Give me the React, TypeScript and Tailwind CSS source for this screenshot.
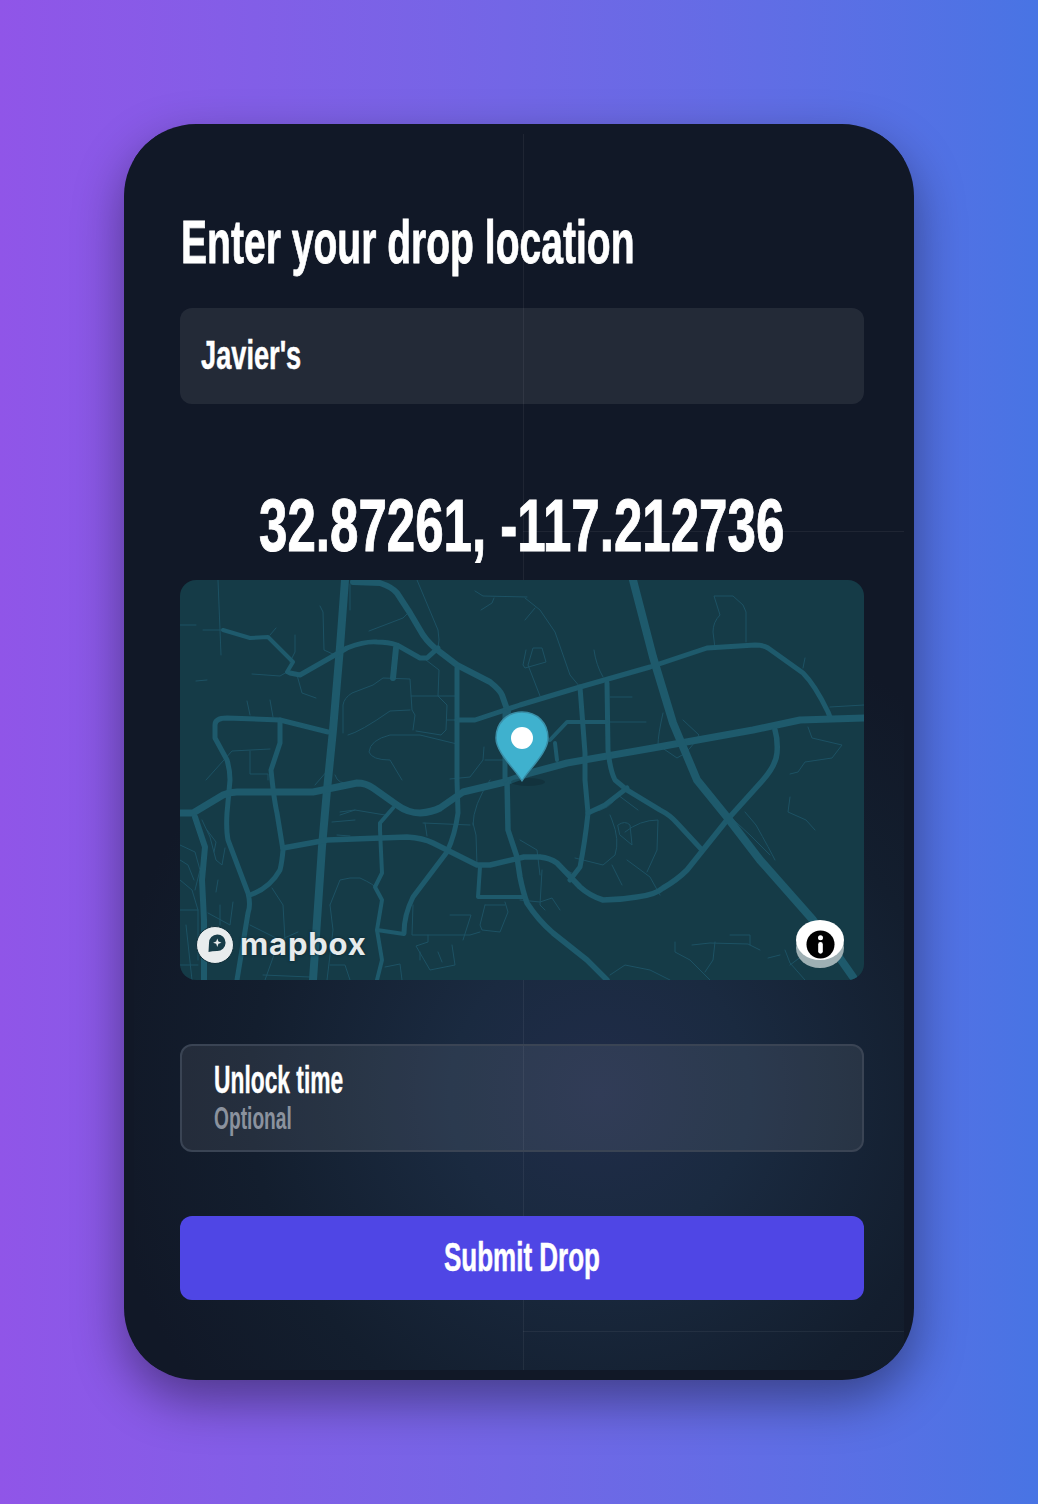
import React from 'react';

// major roads, in map coordinates (684x400)
const majorRoads: [string, number][] = [
  ['M165 0 L160 67 L153 150 L147 210 L142 267 L133 400', 8],
  ['M173 2 L200 3 Q212 7 217 13 L230 33 L243 55 Q250 65 260 72 L277 85 L310 102 Q320 110 322 115 L328 132', 6],
  ['M110 93 L120 95 L155 75 L167 68 Q185 61 197 62 Q208 62 217 65 L240 78 L247 78 L258 68', 5],
  ['M43 50 L70 58 L88 57 L113 82 L107 92 L110 93', 4],
  ['M216 68 L213 98', 6],
  ['M277 88 L277 200 L278 233 Q275 255 267 272 L233 317 Q224 335 224 353', 5],
  ['M277 140 L295 140 L340 125 L400 107 L470 87 L527 68 L575 65 Q583 65 588 68 L623 93 Q635 105 648 132 L650 137', 5],
  ['M148 152 L100 140 L47 138 Q35 138 35 145 L35 158 L47 180 Q50 190 50 200 L47 233 Q46 250 48 260 L68 313 Q71 325 68 333 L57 400', 5],
  ['M100 140 L100 163 L91 190 Q94 220 97 233 L103 270 Q102 282 100 290 Q90 308 70 315', 5],
  ['M0 233 L13 233 L43 215 Q50 212 57 212 L133 212 L177 203 Q186 203 193 208 L217 225 Q228 233 240 233 Q252 232 260 228 L283 212 L325 202 L350 193 L387 183 L473 168 L573 150 L620 140 L684 138', 7],
  ['M15 237 L25 267 L22 300 L24 340 L24 400', 6],
  ['M103 268 L147 260 L227 257 Q243 258 253 263 L277 275 L297 285 L310 285 L344 277 L360 277 Q370 278 377 283 L400 307 Q410 316 423 320 Q440 320 457 317 Q475 315 483 308 Q497 300 507 290 L547 240 L583 200 Q596 185 597 173 Q598 160 595 150', 5.5],
  ['M327 200 L328 250 L337 277 L340 297 Q343 312 347 323 Q358 340 373 353 L407 380 L427 400', 5.5],
  ['M213 228 L200 243 L200 250 L202 293 L195 307 L202 320 L197 350 L202 380 L197 400', 4],
  ['M197 350 L224 354', 4],
  ['M300 287 L298 317 L344 317', 4],
  ['M453 0 L473 77 L493 143 L517 200 L547 237 L580 280 L633 340 L673 397', 8],
  ['M400 107 L405 173 L405 200 L408 233 Q405 262 400 287 L390 300', 5],
  ['M427 103 L428 170 Q430 190 435 200 L447 210 L480 230 Q490 235 497 243 L522 270', 5],
  ['M408 233 L425 225 L447 208', 5],
  ['M370 160 L387 142 L427 142', 4],
  ['M375 163 L377 180', 4],
  ['M325 132 L325 200', 5],
];

// thin local streets
const minorRoads: string[] = [
  'M38 0 L41 75', 'M0 45 L16 45', 'M23 50 L43 50', 'M90 55 L96 48', 'M115 55 L115 72 L110 82',
  'M140 26 L143 32 L144 70 L155 75', 'M72 94 L100 96 L107 92', 'M117 95 L122 113 L136 118',
  'M16 101 L27 100', 'M67 121 L70 135', 'M90 120 L93 137',
  'M170 4 L170 30', 'M189 51 L223 38 L228 33', 'M237 0 L258 50 L259 60 L258 68',
  'M295 11 L303 16 L347 17', 'M314 18 L312 23 L301 30',
  'M163 153 L163 125 Q164 118 172 113 L193 105 L203 98 L230 99 L232 130 L235 135 L233 150',
  'M231 116 L277 116', 'M246 80 L259 90 L258 116 L267 125 L266 150 L261 155 L236 151',
  'M277 140 L267 140', 'M168 155 Q180 152 210 131 L230 130',
  'M277 164 L240 155 L210 155 Q190 160 189 172 Q192 180 210 180 L222 200',
  'M304 167 L303 180 L290 197 L270 199', 'M305 180 L325 180',
  'M26 200 L52 171 L90 169', 'M70 171 L70 194 L88 194 L88 200',
  'M148 190 L135 205', 'M155 195 Q158 205 170 203',
  'M345 18 L360 30 L375 52 L390 95 L400 107', 'M345 40 L355 28',
  'M346 70 L343 85 L345 88 L366 82 L362 68 L353 68 L348 85 L360 116',
  'M414 70 Q416 85 423 97', 'M430 117 L452 117', 'M430 142 L466 142',
  'M535 68 L533 52 Q533 42 540 35 L534 16 L553 16 L563 25 L566 32 L566 62',
  'M623 88 L625 78', 'M650 127 L684 125',
  'M483 133 Q478 155 478 165 L497 178 Q510 172 519 155 L503 140',
  'M628 147 L632 158 L662 165 L652 178 L625 182 L618 192 L610 194',
  'M160 232 L175 230 M152 242 L175 240 M157 255 L170 256',
  'M22 240 L30 257 L36 280 L42 285 L45 268',
  'M0 265 L15 272 L20 290 L15 310 M0 300 L12 310 L18 330 L18 380 M0 330 L18 330',
  'M40 325 L40 345 M53 322 L50 345 L28 333',
  'M92 308 L103 325 L105 360 M70 345 L100 360 L118 352',
  'M150 325 L160 300 Q170 297 180 298 Q195 305 195 307 M150 325 L153 350 L147 400',
  'M160 235 L175 230 L205 235',
  'M245 243 L247 256 M243 243 L290 245',
  'M293 243 L296 255 L297 285', 'M310 200 Q293 225 293 245',
  'M305 325 L300 345 L302 350 L320 352 L328 332 L325 322 M305 325 L325 325',
  'M233 325 L232 355 L290 355 L300 352',
  'M270 335 L291 335 L283 360',
  'M248 355 L248 362 L236 366 L250 390 L275 385 L272 365',
  'M85 400 L95 372 M83 395 L130 397',
  'M150 385 L165 385 L170 400',
  'M340 260 L357 270 L360 295',
  'M360 275 L395 295',
  'M340 320 L360 322 L372 318 L380 330 M362 290 L360 325 L365 330',
  'M412 232 Q430 230 438 215 L458 230',
  'M430 235 L432 240 Q440 260 435 275 L423 285 L395 278',
  'M438 245 Q445 240 450 245 L452 265 L440 255 Z', 'M445 252 Q460 240 478 240 L477 270 L467 292',
  'M432 285 L442 305 M447 280 L470 297 L480 315',
  'M610 217 L608 232 L626 240 L635 250',
  'M545 232 L570 255 L590 275', 'M565 232 L576 245 Q590 270 595 280',
  'M495 362 L495 372 L510 380 L530 400 M512 365 L530 363 L568 364 L580 370',
  'M550 355 L570 355 L570 365 M535 362 L533 380 L525 392',
  'M588 378 L600 375 M605 370 L610 383 L625 400',
  'M610 385 L630 370 L637 365',
  'M430 395 L445 385 L470 390 L490 400',
  'M0 280 L8 285 L14 300 M6 345 L12 400 M0 385 L18 385',
  'M27 250 L36 262 L34 272 M38 300 L36 312',
  'M205 387 L220 384 L222 400 M240 372 L240 380 M258 372 L262 382',
];

const App: React.FC = () => {
  return (
    <div className="w-[1038px] h-[1504px] bg-gradient-to-r from-[#9055e8] to-[#4874e4] flex items-center justify-center font-['Liberation_Sans',sans-serif] font-bold">
      <div className="relative w-[790px] h-[1256px] rounded-[72px] bg-[#111827] shadow-[0_20px_50px_rgba(0,0,0,0.4)] overflow-hidden pl-[56px] pr-[50px] pt-[88px]">
        {/* glow layer, inset from the card */}
        <div className="absolute left-[10px] right-[10px] top-[10px] bottom-[10px] bg-[radial-gradient(circle_500px_at_466px_960px,#202c49_0%,#1a2a40_30%,#131e2e_70%,#111827_100%)]"></div>

        {/* faint grid lines behind the content */}
        <div className="absolute left-[399px] top-[10px] bottom-[10px] w-px bg-white/6"></div>
        <div className="absolute left-[399px] right-[10px] top-[407px] h-px bg-white/6"></div>
        <div className="absolute left-[399px] right-[10px] top-[1207px] h-px bg-white/6"></div>

        <div className="relative">
          <h1 className="text-[62px] leading-[60px] text-white ml-px whitespace-nowrap origin-left scale-x-[0.63] [-webkit-text-stroke:0.8px_white]">Enter your drop location</h1>

          <div className="mt-[36px] h-[96px] rounded-xl bg-white/8 flex items-center px-[21px]">
            <span className="text-[40px] leading-[44px] -mt-[3px] text-white whitespace-nowrap origin-left scale-x-[0.68] [-webkit-text-stroke:0.5px_white]">Javier's</span>
          </div>

          <div className="mt-[84px] h-[92px] flex justify-center">
            <p className="shrink-0 text-[74px] leading-[76px] text-white whitespace-nowrap scale-x-[0.69] [-webkit-text-stroke:1px_white]">32.87261, -117.212736</p>
          </div>

          {/* map */}
          <div className="relative h-[400px] rounded-2xl overflow-hidden bg-[#153b47]">
            <svg viewBox="0 0 684 400" className="w-[684px] h-[400px] block" fill="none" strokeLinecap="round" strokeLinejoin="round">
              <g stroke="#1d5264" strokeWidth="1">
                {minorRoads.map((d, i) => <path key={i} d={d} />)}
              </g>
              <g stroke="#1e5a6c">
                {majorRoads.map(([d, w], i) => <path key={i} d={d} strokeWidth={w} />)}
              </g>
              {/* pin */}
              <ellipse cx="348" cy="202" rx="17" ry="4" fill="#000" opacity="0.14" />
              <path d="M342 201 C336 190 316 173 316 158 C316 143 327 132 342 132 C357 132 368 143 368 158 C368 173 348 190 342 201 Z" fill="#3fb1ce" stroke="#3a8fa8" strokeWidth="1.5" />
              <circle cx="342" cy="158" r="11" fill="#fff" />
            </svg>

            {/* mapbox logo */}
            <div className="absolute left-[16px] bottom-[16px] flex items-center gap-[6px]">
              <svg viewBox="0 0 38 38" className="w-[38px] h-[38px]">
                <circle cx="19" cy="19" r="18.5" fill="#e8eced" stroke="#102f3a" strokeWidth="1" />
                <path d="M12.5 26 L13 17 A8.3 8.3 0 1 1 21 25 Q16 25 12.5 26 Z" fill="#163c48" />
                <path d="M21.3 12.5 L22.4 15.6 L25.5 16.7 L22.4 17.8 L21.3 20.9 L20.2 17.8 L17.1 16.7 L20.2 15.6 Z" fill="#e8eced" />
              </svg>
              <span className="text-[31px] leading-[38px] -mt-[2px] font-['Inter',sans-serif] font-bold text-[#e6ebec] tracking-[0.8px] [text-shadow:0_0_3px_rgba(10,30,40,0.9)]">mapbox</span>
            </div>

            {/* info button */}
            <div className="absolute right-[20px] bottom-[20px] w-[48px] h-[40px] rounded-[50%] bg-white shadow-[0_8px_0_#9fb0b4] flex items-center justify-center">
              <svg viewBox="0 0 30 30" className="w-[29px] h-[29px] mt-[8px]">
                <circle cx="15" cy="15" r="14.5" fill="#000" />
                <circle cx="15" cy="8" r="2.6" fill="#fff" />
                <rect x="12.6" y="12.5" width="4.8" height="12" rx="2.4" fill="#fff" />
              </svg>
            </div>
          </div>

          <div className="mt-[64px] h-[108px] rounded-xl border-2 border-[#3a4454] bg-white/8 pl-[32px] pt-[13px] flex flex-col items-start">
            <span className="text-[38px] leading-[42px] text-white whitespace-nowrap origin-left scale-x-[0.6] [-webkit-text-stroke:0.4px_white]">Unlock time</span>
            <span className="text-[32px] leading-[34px] text-[#8b929e] whitespace-nowrap origin-left scale-x-[0.6]">Optional</span>
          </div>

          <button className="mt-[64px] w-full h-[84px] rounded-xl bg-[#4f46e5] flex items-center justify-center">
            <span className="text-[40px] leading-[44px] -mt-[2px] text-white whitespace-nowrap scale-x-[0.65] [-webkit-text-stroke:0.5px_white]">Submit Drop</span>
          </button>
        </div>
      </div>
    </div>
  );
};

export default App;
